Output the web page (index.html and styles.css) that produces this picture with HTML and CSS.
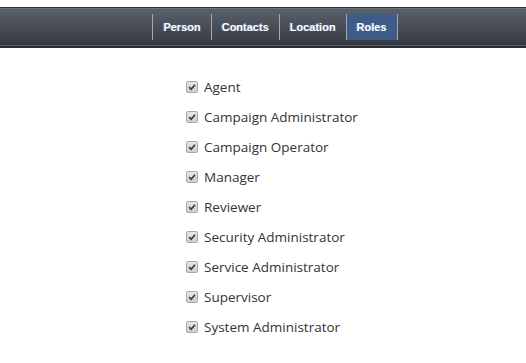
FILE: index.html
```html
<!DOCTYPE html>
<html lang="en">
<head>
  <meta charset="UTF-8" /><meta name="viewport" content="width=device-width, initial-scale=1.0"/>
  <title>Roles</title>
  <link rel="stylesheet" href="styles.css">
</head>
<body>
  <header class="tabbar">
    <nav class="tabs">
      <a class="tab">Person</a>
      <a class="tab">Contacts</a>
      <a class="tab">Location</a>
      <a class="tab active">Roles</a>
    </nav>
  </header>

  <ul class="roles">
    <li><span class="box"><svg viewBox="0 0 12 12"><path d="M2.6 6.2 L5 8.6 L9.6 3.2" /></svg></span>Agent</li>
    <li><span class="box"><svg viewBox="0 0 12 12"><path d="M2.6 6.2 L5 8.6 L9.6 3.2" /></svg></span>Campaign Administrator</li>
    <li><span class="box"><svg viewBox="0 0 12 12"><path d="M2.6 6.2 L5 8.6 L9.6 3.2" /></svg></span>Campaign Operator</li>
    <li><span class="box"><svg viewBox="0 0 12 12"><path d="M2.6 6.2 L5 8.6 L9.6 3.2" /></svg></span>Manager</li>
    <li><span class="box"><svg viewBox="0 0 12 12"><path d="M2.6 6.2 L5 8.6 L9.6 3.2" /></svg></span>Reviewer</li>
    <li><span class="box"><svg viewBox="0 0 12 12"><path d="M2.6 6.2 L5 8.6 L9.6 3.2" /></svg></span>Security Administrator</li>
    <li><span class="box"><svg viewBox="0 0 12 12"><path d="M2.6 6.2 L5 8.6 L9.6 3.2" /></svg></span>Service Administrator</li>
    <li><span class="box"><svg viewBox="0 0 12 12"><path d="M2.6 6.2 L5 8.6 L9.6 3.2" /></svg></span>Supervisor</li>
    <li><span class="box"><svg viewBox="0 0 12 12"><path d="M2.6 6.2 L5 8.6 L9.6 3.2" /></svg></span>System Administrator</li>
  </ul>
</body>
</html>
```
FILE: styles.css
```css
* { box-sizing: border-box; margin: 0; padding: 0; }

body {
  background: #fff;
  color: #333;
  font-family: 'Open Sans', sans-serif;
}

.tabbar {
  margin-top: 7px;
  height: 41px;
  background: linear-gradient(#5b616b, #3a3f49 85%, #30343c);
  border-top: 1px solid #2e3137;
  border-bottom: 2px solid #2a2d33;
  box-shadow: inset 0 1px 0 #6c727b, inset 0 -1px 0 #5b5f66;
}

.tabs {
  display: flex;
  justify-content: center;
  padding: 6px 0 0 24px;
  height: 100%;
}

.tab {
  display: block;
  height: 26px;
  line-height: 26px;
  padding: 0 10px;
  border-right: 1px solid #a3a7ad;
  color: #fff;
  font-family: 'Liberation Sans', Arial, sans-serif;
  font-size: 11px;
  font-weight: bold;
  text-shadow: -1px 0 0 rgba(120, 170, 230, 0.55);
}

.tab:first-child {
  border-left: 1px solid #a3a7ad;
}

.tab.active {
  padding: 0 10px;
  background: #3e5c87;
}

.roles {
  list-style: none;
  padding: 24px 0 0 186px;
}

.roles li {
  display: flex;
  align-items: center;
  height: 30px;
  font-size: 13.5px;
}

.box {
  width: 12px;
  height: 12px;
  margin-right: 6px;
  border: 1px solid #a9a9a9;
  border-radius: 2px;
  background: linear-gradient(#e6e6e6, #cfcfcf);
}

.box svg {
  display: block;
  width: 10px;
  height: 10px;
  fill: none;
  stroke: #3b3b3b;
  stroke-width: 2;
}
```
